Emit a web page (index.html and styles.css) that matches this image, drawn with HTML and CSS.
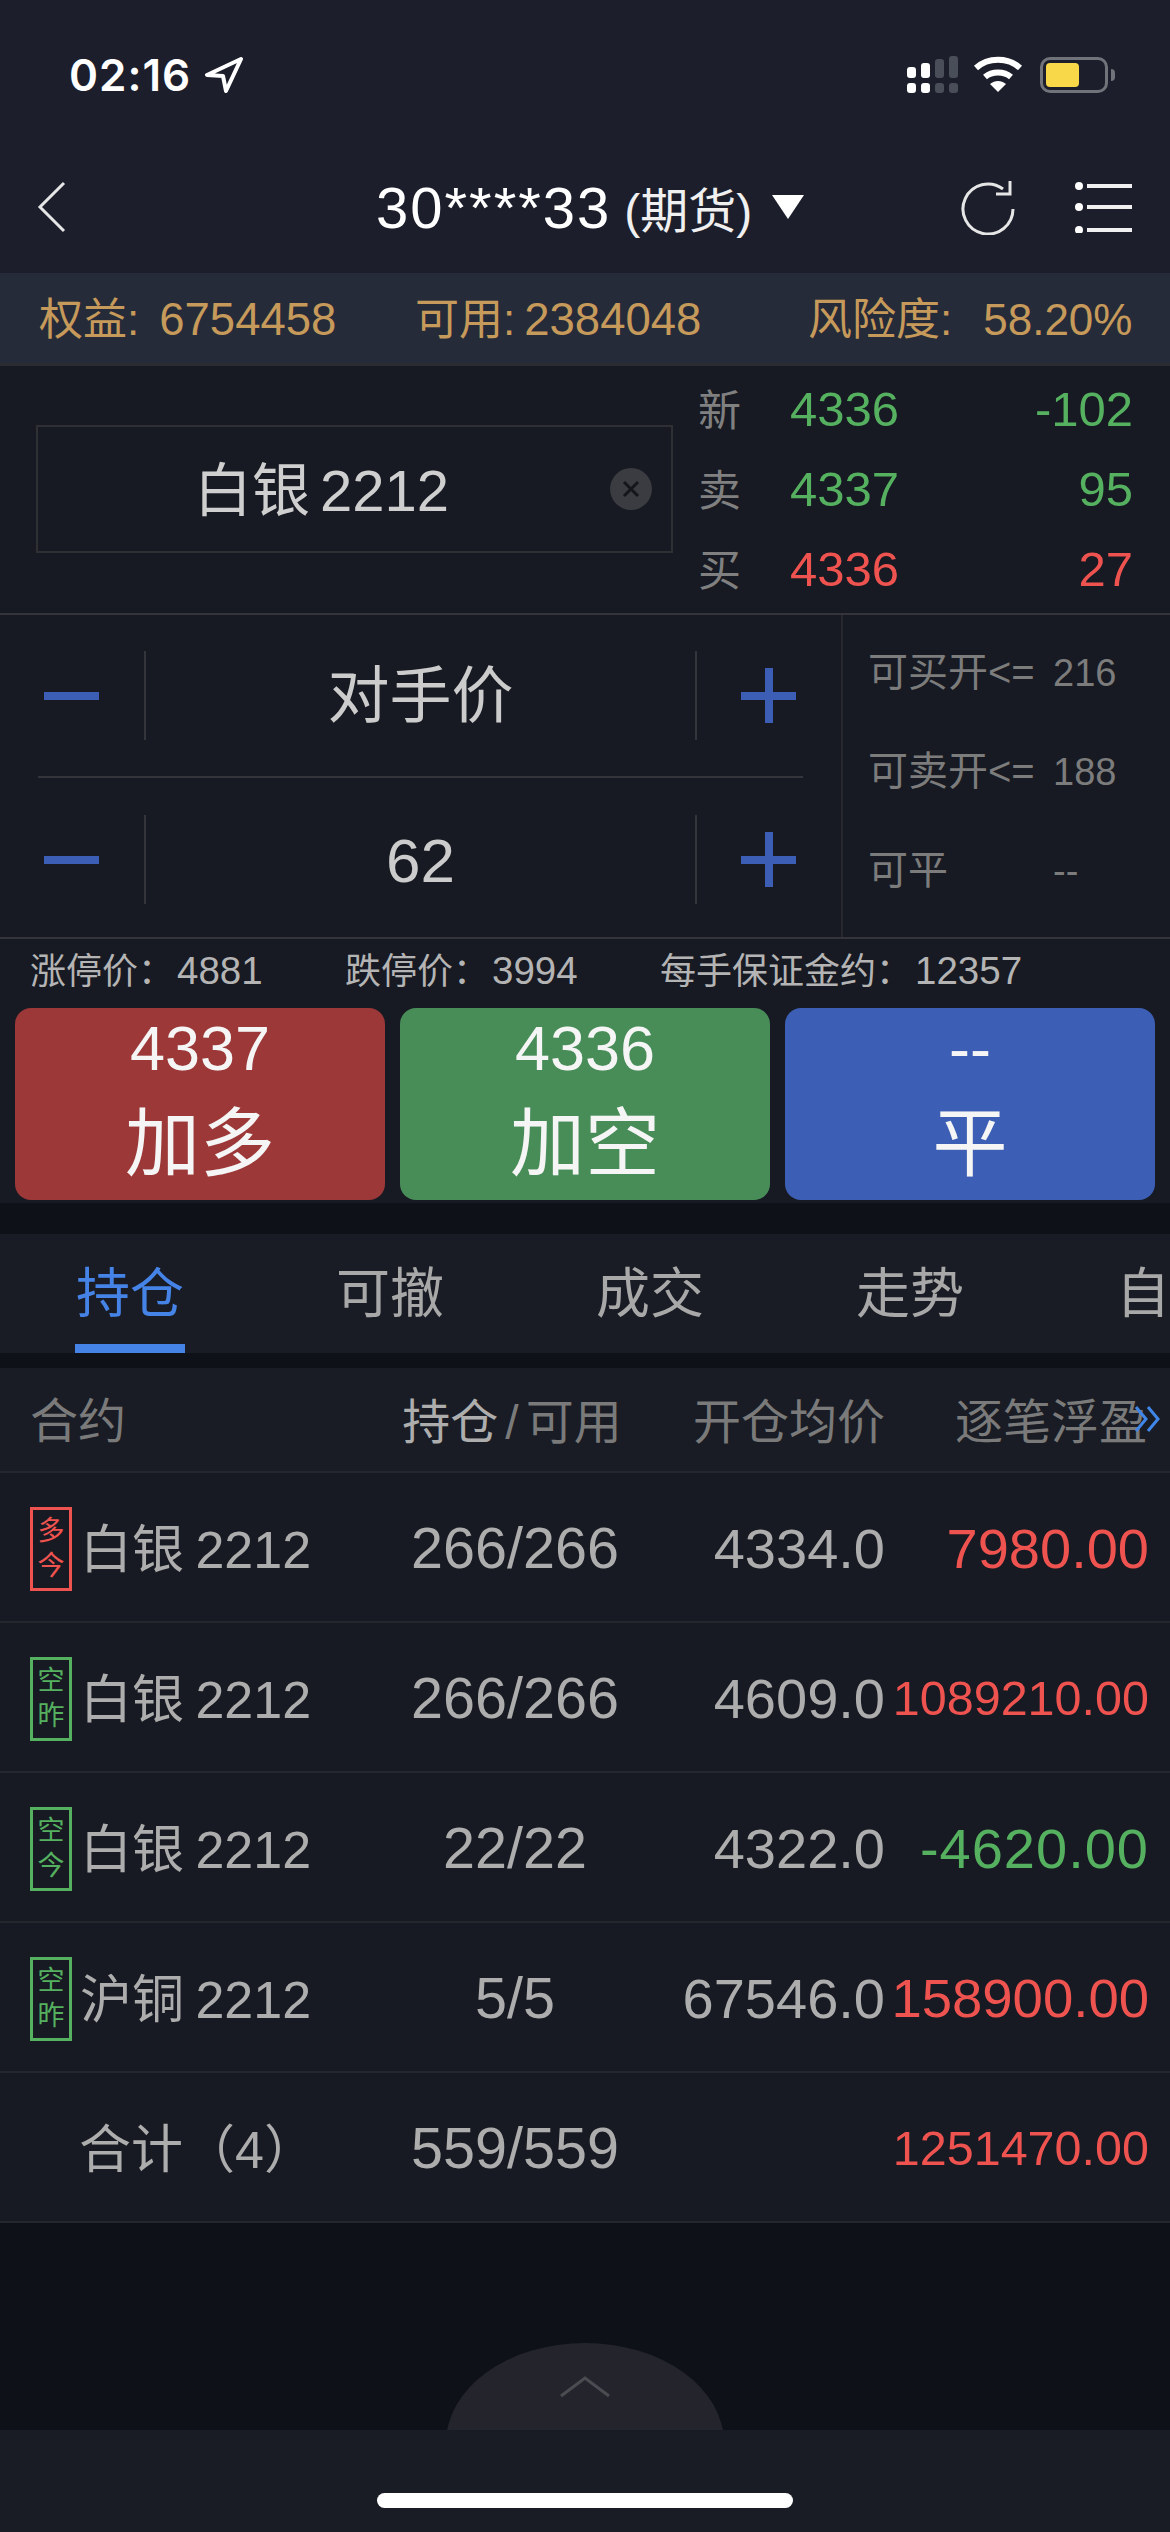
FILE: index.html
```html
<!DOCTYPE html>
<html lang="zh-CN">
<head>
  <meta charset="UTF-8" />
  <meta name="viewport" content="width=device-width, initial-scale=1.0" />
  <title>白银 2212 - 交易</title>
  <link rel="stylesheet" href="styles.css">
</head>
<body>
  <header class="top">
    <div class="status">
      <span class="time">02:16</span>
      <svg class="loc" width="38" height="36" viewBox="0 0 38 36"><path d="M36 2 L2 18 L18 19 L21 34 Z" fill="none" stroke="#fff" stroke-width="4" stroke-linejoin="round"/></svg>
      <div class="status-right">
        <svg class="signal" width="52" height="38" viewBox="0 0 52 38">
          <rect x="0" y="11" width="9" height="11" rx="3" fill="#fff"/>
          <rect x="14" y="7" width="9" height="15" rx="3" fill="#fff"/>
          <rect x="28" y="3" width="9" height="19" rx="3" fill="#4a4e59"/>
          <rect x="42" y="0" width="9" height="22" rx="3" fill="#4a4e59"/>
          <rect x="0" y="27" width="9" height="10" rx="3" fill="#fff"/>
          <rect x="14" y="27" width="9" height="10" rx="3" fill="#fff"/>
          <rect x="28" y="27" width="9" height="10" rx="3" fill="#4a4e59"/>
          <rect x="42" y="27" width="9" height="10" rx="3" fill="#4a4e59"/>
        </svg>
        <svg width="50" height="38" viewBox="0 0 50 38">
          <path d="M3 12 C15 1 35 1 47 12" fill="none" stroke="#fff" stroke-width="6"/>
          <path d="M12 21 C19 15 31 15 38 21" fill="none" stroke="#fff" stroke-width="6"/>
          <path d="M17 28 C22 24 28 24 33 28 L25 36 Z" fill="#fff"/>
        </svg>
        <div class="battery"><div class="battery-fill"></div></div>
        <div class="battery-nub"></div>
      </div>
    </div>
    <div class="nav">
      <svg class="back" width="30" height="52" viewBox="0 0 30 52"><path d="M27 2 L3 26 L27 50" fill="none" stroke="#e6e6e6" stroke-width="3"/></svg>
      <div class="title">
        <span class="title-no">30****33</span>
        <span class="title-type">(期货)</span>
        <svg width="32" height="24" viewBox="0 0 32 24"><path d="M0 0 H32 L16 24 Z" fill="#fff"/></svg>
      </div>
      <svg class="refresh" width="56" height="56" viewBox="0 0 56 56">
        <path d="M43 10 A25 25 0 1 0 53 30" fill="none" stroke="#e6e6e6" stroke-width="3"/>
        <path d="M36 15 H50 V2" fill="none" stroke="#e6e6e6" stroke-width="3"/>
      </svg>
      <svg class="menu" width="58" height="52" viewBox="0 0 58 52">
        <circle cx="5" cy="5" r="4" fill="#fff"/><rect x="13" y="3" width="45" height="4" fill="#f0f0f0"/>
        <circle cx="5" cy="26" r="4" fill="#fff"/><rect x="13" y="24" width="45" height="4" fill="#f0f0f0"/>
        <circle cx="5" cy="49" r="4" fill="#fff"/><rect x="13" y="47" width="45" height="4" fill="#f0f0f0"/>
      </svg>
    </div>
  </header>

  <div class="account">
    <span class="acc-1">权益:<b>6754458</b></span>
    <span class="acc-2">可用:<b>2384048</b></span>
    <span class="acc-3">风险度:<b>58.20%</b></span>
  </div>

  <section class="quote">
    <div class="symbol">
      <span>白银 2212</span>
      <svg class="clear" width="42" height="42" viewBox="0 0 42 42">
        <circle cx="21" cy="21" r="21" fill="#3b3c41"/>
        <path d="M14 14 L28 28 M28 14 L14 28" stroke="#14161c" stroke-width="3"/>
      </svg>
    </div>
    <div class="prices">
      <div class="price-row"><span class="p-label">新</span><span class="p-num green">4336</span><span class="p-vol green">-102</span></div>
      <div class="price-row"><span class="p-label">卖</span><span class="p-num green">4337</span><span class="p-vol green">95</span></div>
      <div class="price-row"><span class="p-label">买</span><span class="p-num red">4336</span><span class="p-vol red">27</span></div>
    </div>
  </section>

  <section class="order">
    <div class="steppers">
      <div class="stepper">
        <div class="step-btn"><i class="minus"></i></div>
        <div class="step-val">对手价</div>
        <div class="step-btn"><i class="plus"></i></div>
      </div>
      <div class="stepper stepper-b">
        <div class="step-btn"><i class="minus"></i></div>
        <div class="step-val">62</div>
        <div class="step-btn"><i class="plus"></i></div>
      </div>
    </div>
    <div class="avail">
      <div class="avail-row"><span class="avail-k">可买开&lt;=</span><span>216</span></div>
      <div class="avail-row"><span class="avail-k">可卖开&lt;=</span><span>188</span></div>
      <div class="avail-row"><span class="avail-k">可平</span><span>--</span></div>
    </div>
  </section>

  <div class="limits">
    <span class="lim-1">涨停价：<b>4881</b></span>
    <span class="lim-2">跌停价：<b>3994</b></span>
    <span class="lim-3">每手保证金约：<b>12357</b></span>
  </div>

  <div class="actions">
    <div class="action a-red"><span class="a-price">4337</span><span class="a-name">加多</span></div>
    <div class="action a-green"><span class="a-price">4336</span><span class="a-name">加空</span></div>
    <div class="action a-blue"><span class="a-price">--</span><span class="a-name">平</span></div>
  </div>

  <nav class="tabs">
    <a class="tab active">持仓</a>
    <a class="tab">可撤</a>
    <a class="tab">成交</a>
    <a class="tab">走势</a>
    <a class="tab">自选</a>
  </nav>

  <section class="table">
    <div class="row head">
      <div class="c-name">合约</div>
      <div class="c-qty"><em>持仓</em><s>/</s>可用</div>
      <div class="c-avg">开仓均价</div>
      <div class="c-pnl">逐笔浮盈</div>
      <svg class="more" width="28" height="26" viewBox="0 0 28 26"><path d="M3 1 L13 13 L3 25 M15 1 L25 13 L15 25" fill="none" stroke="#3f86e8" stroke-width="3"/></svg>
    </div>
    <div class="row">
      <div class="c-name"><span class="tag tag-red"><i>多</i><i>今</i></span>白银 2212</div>
      <div class="c-qty">266/266</div>
      <div class="c-avg">4334.0</div>
      <div class="c-pnl red">7980.00</div>
    </div>
    <div class="row">
      <div class="c-name"><span class="tag tag-green"><i>空</i><i>昨</i></span>白银 2212</div>
      <div class="c-qty">266/266</div>
      <div class="c-avg">4609.0</div>
      <div class="c-pnl red small">1089210.00</div>
    </div>
    <div class="row">
      <div class="c-name"><span class="tag tag-green"><i>空</i><i>今</i></span>白银 2212</div>
      <div class="c-qty">22/22</div>
      <div class="c-avg">4322.0</div>
      <div class="c-pnl green wide">-4620.00</div>
    </div>
    <div class="row">
      <div class="c-name"><span class="tag tag-green"><i>空</i><i>昨</i></span>沪铜 2212</div>
      <div class="c-qty">5/5</div>
      <div class="c-avg">67546.0</div>
      <div class="c-pnl red mid">158900.00</div>
    </div>
    <div class="row">
      <div class="c-name c-total">合计（4）</div>
      <div class="c-qty">559/559</div>
      <div class="c-avg"></div>
      <div class="c-pnl red small">1251470.00</div>
    </div>
  </section>

  <div class="spare">
    <svg class="handle" width="278" height="87" viewBox="0 0 278 87">
      <ellipse cx="139" cy="100" rx="139" ry="100" fill="#24252c"/>
      <path d="M115 53 L139 35 L163 53" fill="none" stroke="#4b4c52" stroke-width="3"/>
    </svg>
  </div>

  <footer class="home">
    <div class="home-bar"></div>
  </footer>
</body>
</html>
```

FILE: styles.css
```css
* {
  box-sizing: border-box;
}
body {
  margin: 0;
  width: 1170px;
  height: 2532px;
  overflow: hidden;
  display: flex;
  flex-direction: column;
  background: #0e1118;
  color: #aaaaaa;
  font-family: "Liberation Sans", "Noto Sans CJK SC", sans-serif;
}
b, em, i {
  font-weight: normal;
  font-style: normal;
}
.green {
  color: #55b160;
}
.red {
  color: #ef5350;
}

/* top bar */
.top {
  background: #1c1f2b;
  height: 273px;
  color: #fff;
}
.status {
  height: 150px;
  display: flex;
  align-items: center;
  padding: 0 55px 0 69px;
}
.time {
  font-family: Inter, sans-serif;
  font-size: 44px;
  font-weight: 600;
  letter-spacing: 1px;
}
.loc {
  margin-left: 14px;
}
.status-right {
  margin-left: auto;
  display: flex;
  align-items: center;
}
.status-right svg {
  margin-right: 16px;
}
.status-right .signal {
  margin-right: 14px;
}
.battery {
  width: 68px;
  height: 36px;
  border: 3px solid #71737a;
  border-radius: 10px;
  padding: 3px;
  margin-left: 1px;
}
.battery-fill {
  width: 33px;
  height: 24px;
  background: #f8d848;
  border-radius: 4px;
}
.battery-nub {
  width: 4px;
  height: 12px;
  margin-left: 3px;
  background: #71737a;
  border-radius: 0 4px 4px 0;
}
.nav {
  height: 114px;
  display: flex;
  align-items: center;
  padding: 0 37px;
}
.title {
  margin-left: 309px;
  display: flex;
  align-items: center;
  width: 500px;
}
.title-no {
  font-size: 58px;
  letter-spacing: 2px;
}
.title-type {
  font-size: 48px;
  margin-left: 13px;
  color: #f0f0f0;
}
.title svg {
  margin-left: 20px;
}
.refresh {
  margin-left: 84px;
}
.menu {
  margin-left: 58px;
}

/* account band */
.account {
  height: 93px;
  background: #262b39;
  border-bottom: 3px solid #2b2c31;
  display: flex;
  align-items: center;
  padding: 0 0 4px 39px;
  color: #c69a5a;
  font-size: 44px;
}
.account b {
  font-size: 45.5px;
}
.acc-1 {
  width: 376px;
}
.acc-1 b {
  margin-left: 20px;
}
.acc-2 {
  width: 393px;
}
.acc-2 b {
  margin-left: 9px;
}
.acc-3 b {
  margin-left: 31px;
  font-size: 44px;
}

/* symbol and quotes */
.quote {
  height: 249px;
  background: #171a22;
  border-bottom: 2px solid #33353b;
  display: flex;
}
.symbol {
  position: relative;
  margin: 59px 0 0 36px;
  width: 637px;
  height: 128px;
  border: 2px solid #2f3034;
  display: flex;
  align-items: center;
  justify-content: center;
  color: #cfcfcf;
  font-size: 58px;
  word-spacing: -6px;
  padding: 0 66px 6px 0;
}
.clear {
  position: absolute;
  right: 19px;
  top: 41px;
}
.prices {
  flex: 1;
  padding: 4px 37px 0 25px;
}
.price-row {
  height: 80px;
  display: flex;
  align-items: baseline;
  font-size: 49px;
  line-height: 79px;
}
.p-label {
  width: 92px;
  font-size: 43px;
  color: #808080;
}
.p-vol {
  margin-left: auto;
}

/* order */
.order {
  height: 324px;
  background: #171a22;
  border-bottom: 2px solid #33353b;
  display: flex;
}
.steppers {
  width: 843px;
  padding: 0 38px;
  border-right: 2px solid #26282e;
}
.stepper {
  height: 163px;
  display: flex;
  align-items: center;
  border-bottom: 2px solid #33353b;
}
.stepper-b {
  border-bottom: none;
}
.step-btn {
  width: 108px;
  height: 89px;
  display: flex;
  align-items: center;
  flex: none;
}
.step-btn:first-child {
  border-right: 2px solid #33353b;
  padding-left: 6px;
}
.step-btn:last-child {
  border-left: 2px solid #33353b;
  justify-content: flex-end;
  padding-right: 7px;
}
.step-val {
  flex: 1;
  text-align: center;
  font-size: 62px;
  line-height: 80px;
  padding-top: 3px;
  color: #cccccc;
}
.minus {
  display: block;
  width: 55px;
  height: 8px;
  background: #3c5fb5;
}
.plus {
  display: block;
  width: 55px;
  height: 55px;
  background:
    linear-gradient(#3c5fb5, #3c5fb5) center / 100% 8px no-repeat,
    linear-gradient(#3c5fb5, #3c5fb5) center / 8px 100% no-repeat;
}
.avail {
  flex: 1;
  padding: 8px 0 0 25px;
  color: #7c7c7c;
  font-size: 38px;
}
.avail-row {
  display: flex;
  align-items: baseline;
  line-height: 98px;
}
.avail-k {
  width: 185px;
  font-size: 40px;
}

/* limit prices */
.limits {
  height: 69px;
  background: #171a22;
  display: flex;
  align-items: center;
  color: #b4b4b4;
  font-size: 36px;
  padding: 0 0 12px 30px;
}
.limits b {
  font-size: 38.5px;
  margin-left: 3px;
}
.lim-1 {
  width: 315px;
}
.lim-2 {
  width: 315px;
}

/* action buttons */
.actions {
  height: 195px;
  background: #171a22;
  display: flex;
  gap: 15px;
  padding: 0 15px 3px;
}
.action {
  flex: 1;
  border-radius: 16px;
  color: #f5f5f5;
  display: flex;
  flex-direction: column;
  align-items: center;
}
.a-red {
  background: #9c3838;
}
.a-green {
  background: #488d58;
}
.a-blue {
  background: #3c5fb5;
}
.a-price {
  font-size: 63px;
  line-height: 80px;
}
.a-name {
  font-size: 75px;
  line-height: 112px;
}

/* tabs */
.tabs {
  margin-top: 31px;
  height: 119px;
  background: #191c24;
  display: flex;
  overflow: hidden;
}
.tab {
  flex: none;
  width: 260px;
  text-align: center;
  font-size: 54px;
  line-height: 120px;
  color: #a8a8a8;
}
.tab.active {
  color: #4583e6;
  background: linear-gradient(#4583e6, #4583e6) center bottom / 110px 9px no-repeat;
}

/* positions table */
.table {
  margin-top: 15px;
  background: #171a22;
}
.row {
  height: 150px;
  display: grid;
  grid-template-columns: 400px 230px 255px 264px;
  align-items: center;
  border-bottom: 2px solid #25272e;
  font-size: 56px;
  color: #adadad;
}
.head {
  position: relative;
  height: 105px;
  padding-bottom: 3px;
  color: #7a7a7a;
  font-size: 48px;
  background: #191c24;
}
.c-name {
  display: flex;
  align-items: center;
  padding: 0 0 3px 30px;
  font-size: 52px;
  white-space: pre;
  word-spacing: -3px;
}
.head .c-name {
  font-size: 48px;
}
.c-total {
  padding-left: 79px;
  font-size: 52px;
}
.c-qty {
  text-align: center;
  white-space: nowrap;
  font-size: 57.5px;
  padding-top: 2px;
}
.c-avg, .c-pnl {
  text-align: right;
  white-space: nowrap;
  padding-top: 2px;
}
.head .c-qty {
  font-size: 48px;
  padding: 0 6px 0 0;
}
.head .c-avg {
  padding-top: 0;
}
.head .c-pnl {
  padding: 0 2px 0 0;
}
.c-qty em {
  color: #adadad;
}
.c-qty s {
  text-decoration: none;
  margin: 0 7px 0 7px;
}
.small {
  font-size: 48.5px;
}
.mid {
  font-size: 54.5px;
}
.wide {
  letter-spacing: 1px;
}
.more {
  position: absolute;
  right: 9px;
  top: 38px;
}
.tag {
  flex: none;
  width: 42px;
  height: 84px;
  border: 3px solid;
  margin: 6px 8px 0 0;
  display: flex;
  flex-direction: column;
  align-items: center;
  justify-content: center;
  font-size: 27px;
  line-height: 35px;
}
.tag-red {
  color: #ef5350;
}
.tag-green {
  color: #55b160;
}

/* bottom */
.spare {
  flex: 1;
  position: relative;
}
.handle {
  position: absolute;
  left: 446px;
  bottom: 0;
}
.home {
  height: 102px;
  background: #191c24;
  padding-top: 63px;
}
.home-bar {
  width: 416px;
  height: 15px;
  margin: 0 auto;
  background: #fff;
  border-radius: 8px;
}
```
